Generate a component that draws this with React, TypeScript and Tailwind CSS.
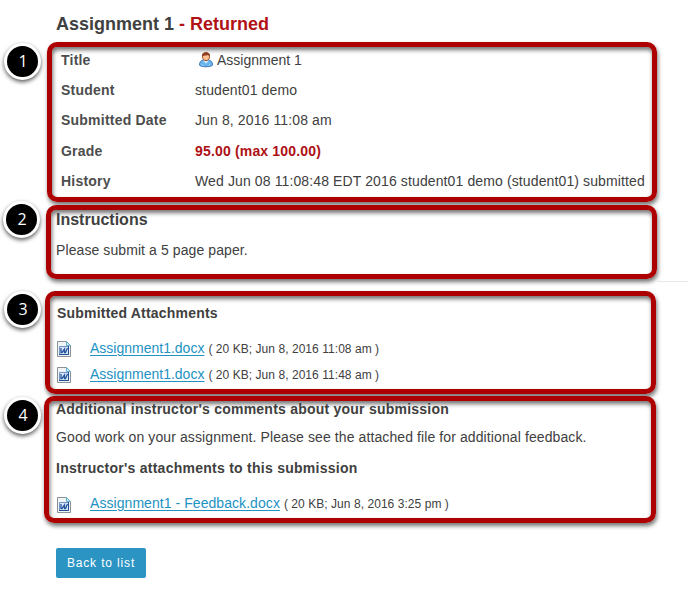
import type { ReactNode } from "react";

function Callout({ n, badge, className, children }: { n: number; badge: string; className: string; children: ReactNode }) {
  return (
    <section
      className={`relative rounded-[10px] border-[5px] border-[#ad0000] shadow-[1px_3px_4px_rgba(0,0,0,0.55),inset_1px_3px_4px_rgba(0,0,0,0.55)] ${className}`}
    >
      <div
        className={`absolute flex size-[37px] items-center justify-center rounded-full border-[3px] border-white bg-black pb-[2px] pl-px font-['Open_Sans','Noto_Sans',sans-serif] text-[16px] text-white shadow-[0_2px_4px_rgba(0,0,0,0.65)] ${badge}`}
      >
        {n}
      </div>
      {children}
    </section>
  );
}

function PersonIcon() {
  return (
    <svg className="mr-[3px] ml-[3px] h-4 w-4 shrink-0" viewBox="0 0 16 16">
      <path d="M1.500 13c0-2.500 1-4.500 3.500-5h6c2.500.500 3.500 2.500 3.500 5-.5 2.300-12.500 2.300-13 0z" fill="#6bb5ee" stroke="#3d78b8" />
      <path d="M5 8.500 8 11.500l3-3z" fill="#d9f0ff" />
      <path d="M4.500 14v-2M11.500 14v-2" fill="none" stroke="#8fcbf7" />
      <path d="M4.500 4.500c0-5 7-5 7 0 0 5.500-7 5.500-7 0z" fill="#ffc393" stroke="#9b4b28" />
      <path d="M4 4.800C3.500 1.800 5.500.3 8 .3s4.500 1.500 4 4.500c-1-.8-1.500-1.500-2-1.800C8 3.800 5.500 3.200 4 4.800z" fill="#8f3f22" />
    </svg>
  );
}

function WordIcon({ className }: { className: string }) {
  return (
    <svg className={`h-4 w-[14px] shrink-0 ${className}`} viewBox="0 0 14 16">
      <path d="M.5.500h9l4 4v11H.5z" fill="#f1f4f7" stroke="#8b9097" />
      <path d="M9.500.500v4h4z" fill="#c5e7f4" stroke="#68aecb" />
      <path d="M2.500 5.500h9v8h-9z" fill="#dce8f8" stroke="#6f93c4" />
      <path d="M11.500 5v8.500H2" fill="none" stroke="#1f4f96" />
      <path d="M4 7v4.500h1L7.500 8v3.500h1L10.500 7" fill="none" stroke="#24559d" strokeWidth="1.300" />
    </svg>
  );
}

function Attachment({ name, meta, iconClass, linkClass, metaClass }: { name: string; meta: string; iconClass: string; linkClass: string; metaClass: string }) {
  return (
    <div className="flex h-[26px] items-center">
      <WordIcon className={iconClass} />
      <a className={`ml-[19px] text-[#2292c3] underline underline-offset-2 ${linkClass}`}>{name}</a>
      <span className={`ml-[4px] text-[12px] ${metaClass}`}>{meta}</span>
    </div>
  );
}

function Row({ label, children }: { label: string; children: ReactNode }) {
  return (
    <div className="flex h-[26px] items-center">
      <dt className="w-[134px] shrink-0 font-bold tracking-[0.22px] text-[#4d4d4d]">{label}</dt>
      <dd className="flex items-center tracking-[0.12px]">{children}</dd>
    </div>
  );
}

export default function App() {
  return (
    <main className="relative h-[598px] w-[688px] overflow-hidden bg-white font-['Liberation_Sans',Arial,sans-serif] text-[14px] leading-[20px] whitespace-nowrap text-[#404040]">
      <h1 className="h-[42px] pt-[12px] pl-[56px] text-[18px] leading-[24px] font-bold">
        Assignment 1 <span className="text-[#b11218]">- Returned</span>
      </h1>
      <Callout n={1} badge="-left-[48px] -top-[4px]" className="ml-[47px] h-[160px] w-[610px] pl-[9px]">
        <dl className="flex flex-col gap-[4.2px]">
          <Row label="Title"><PersonIcon /><span className="tracking-normal">Assignment 1</span></Row>
          <Row label="Student">student01 demo</Row>
          <Row label="Submitted Date">Jun 8, 2016 11:08 am</Row>
          <Row label="Grade"><b className="tracking-[0.17px] text-[#ad1015]">95.00 (max 100.00)</b></Row>
          <Row label="History">Wed Jun 08 11:08:48 EDT 2016 student01 demo (student01) submitted</Row>
        </dl>
      </Callout>
      <Callout n={2} badge="-left-[48px] -top-[9px]" className="mt-[3px] ml-[46px] h-[74px] w-[611px] pl-[5px]">
        <h2 className="text-[16px] leading-[20px] font-bold">Instructions</h2>
        <p className="mt-[10px] tracking-[0.09px]">Please submit a 5 page paper.</p>
      </Callout>
      <div className="mt-[2px] ml-[657px] h-px bg-[#e8e8e8]" />
      <Callout n={3} badge="-left-[46px] -top-[5px]" className="mt-[9px] ml-[45px] h-[103px] w-[611px] pl-[7px]">
        <h3 className="pt-[7px] font-bold tracking-[0.2px]">Submitted Attachments</h3>
        <div className="mt-[13px]">
          <Attachment name="Assignment1.docx" meta="( 20 KB; Jun 8, 2016 11:08 am )" iconClass="" linkClass="-mt-[2px]" metaClass="tracking-[0.05px]" />
          <Attachment name="Assignment1.docx" meta="( 20 KB; Jun 8, 2016 11:48 am )" iconClass="" linkClass="-mt-[2px]" metaClass="tracking-[0.05px]" />
        </div>
      </Callout>
      <Callout n={4} badge="-left-[45px] -top-[4px]" className="mt-[2px] ml-[44px] h-[127px] w-[612px] pl-[7px]">
        <h3 className="leading-[16px] font-bold tracking-[0.23px]">Additional instructor's comments about your submission</h3>
        <p className="mt-[10px] tracking-[0.1px]">Good work on your assignment. Please see the attached file for additional feedback.</p>
        <h3 className="mt-[11px] font-bold tracking-[0.26px]">Instructor's attachments to this submission</h3>
        <div className="mt-[12px] pl-px">
          <Attachment name="Assignment1 - Feedback.docx" meta="( 20 KB; Jun 8, 2016 3:25 pm )" iconClass="mt-[3px]" linkClass="tracking-[0.06px]" metaClass="mt-[2px] tracking-[0.05px]" />
        </div>
      </Callout>
      <button className="mt-[25px] ml-[56px] block h-[30px] w-[90px] rounded-[2px] bg-[#2b94c3] text-[12px] tracking-[0.85px] text-white">
        Back to list
      </button>
    </main>
  );
}
